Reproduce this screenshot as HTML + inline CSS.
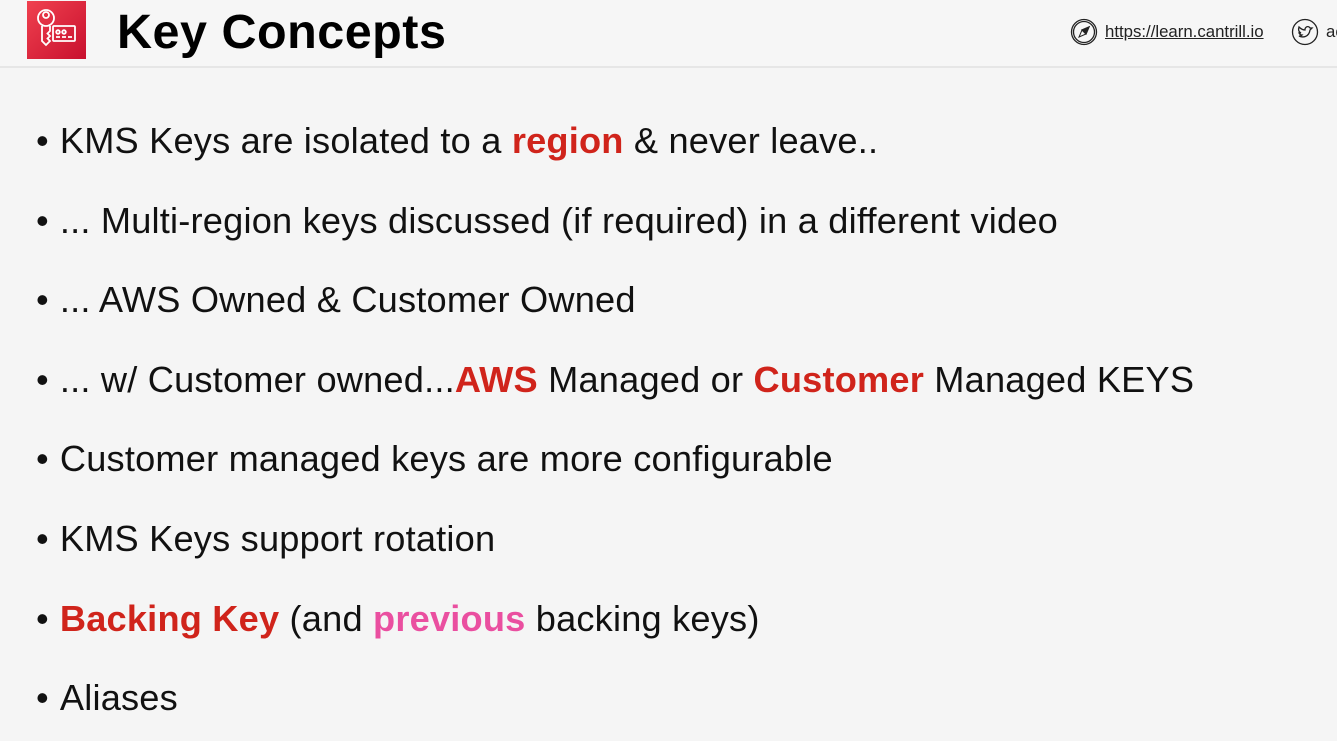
<!DOCTYPE html>
<html><head><meta charset="utf-8"><style>
html,body{margin:0;width:1337px;height:741px;overflow:hidden}
body{background:#f5f5f5;font-family:"Liberation Sans",sans-serif;position:relative}
.hdr{position:absolute;left:0;top:0;width:1337px;height:66px;background:#f6f6f6;border-bottom:2px solid #e6e6e6}
.logo{position:absolute;left:27px;top:1px;width:59px;height:58px;background:linear-gradient(135deg,#f0414f,#c8102e)}
.title{position:absolute;left:117px;top:4px;font-size:48.5px;font-weight:bold;color:#000;letter-spacing:0.5px}
.link{position:absolute;left:1105px;top:22px;font-size:16.8px;color:#222;text-decoration:underline}
ul{position:absolute;left:36px;top:113px;margin:0;padding:0;list-style:none}
li{font-size:36.2px;height:79.6px;line-height:56px;color:#111;white-space:nowrap;letter-spacing:0.2px}
li:before{content:"•";margin-right:11px}
.r{color:#d0241b;font-weight:bold}.p{color:#ea4fa0;font-weight:bold}
</style></head><body>
<div class="hdr"></div>
<div class="logo"><svg width="59" height="58" viewBox="0 0 59 58" fill="none" stroke="#fff" stroke-width="1.8">
<circle cx="19" cy="17" r="8"/><circle cx="19" cy="14" r="3"/>
<path d="M15 25v15l4 4 4-4-2.5-2.5 2.5-2.5-2.5-2.5 2.5-2.5v-5"/>
<rect x="26" y="25" width="22" height="15" rx="1"/>
<circle cx="31" cy="31" r="1.8"/><circle cx="37" cy="31" r="1.8"/>
<path d="M29 36h4M35 36h4M41 36h4"/></svg></div>
<div class="title">Key Concepts</div>
<svg style="position:absolute;left:1070px;top:18px" width="28" height="28" viewBox="0 0 28 28" fill="none" stroke="#222" stroke-width="1.3"><circle cx="14" cy="14" r="12.5"/><circle cx="14" cy="14" r="10.5"/><path d="M19 9l-7 3-3 7 7-3z" stroke-width="1"/><path d="M19 9l-7 3 4 4z" fill="#222"/></svg>
<div class="link">https://learn.cantrill.io</div>
<svg style="position:absolute;left:1291px;top:18px" width="28" height="28" viewBox="0 0 28 28" fill="none" stroke="#222" stroke-width="1.3"><circle cx="14" cy="14" r="12.5"/><path d="M8 18c4 2 10 1 11-6l2-2-2 0c-1-2-4-2-5 1v1c-3 0-5-2-6-3-1 3 0 5 2 6l-2 0c1 2 2 2 3 2-1 1-2 1-3 1z"/></svg>
<div style="position:absolute;left:1326px;top:22px;font-size:16.8px;color:#222">ac</div>
<ul>
<li>KMS Keys are isolated to a <span class="r">region</span> &amp; never leave..</li>
<li>... Multi-region keys discussed (if required) in a different video</li>
<li>... AWS Owned &amp; Customer Owned</li>
<li>... w/ Customer owned...<span class="r">AWS</span> Managed or <span class="r">Customer</span> Managed KEYS</li>
<li>Customer managed keys are more configurable</li>
<li>KMS Keys support rotation</li>
<li><span class="r">Backing Key</span> (and <span class="p">previous</span> backing keys)</li>
<li>Aliases</li>
</ul>
</body></html>
